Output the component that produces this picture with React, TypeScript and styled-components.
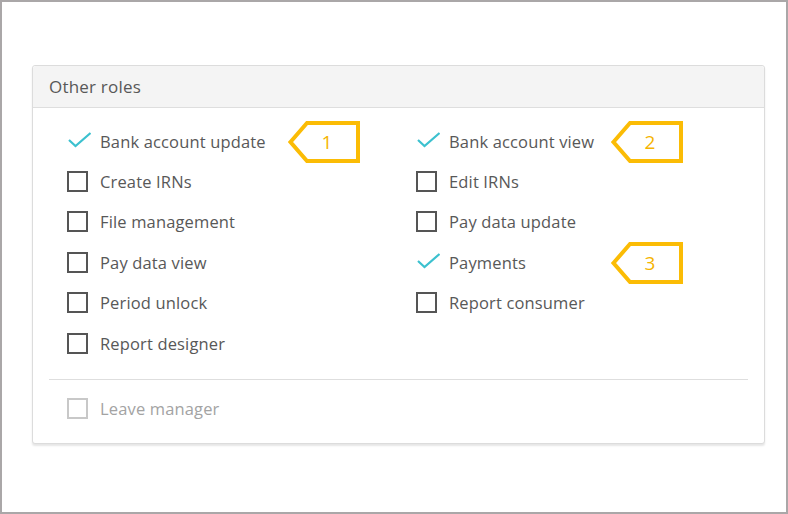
import { createGlobalStyle } from 'styled-components'
import styled from 'styled-components'

const GlobalStyle = createGlobalStyle`
  html, body {
    margin: 0;
    padding: 0;
    background: #fff;
  }
`

const Frame = styled.div`
  box-sizing: border-box;
  width: 788px;
  height: 514px;
  border: 2px solid #aaa7a8;
  padding: 63px 21px 0 30px;
  font-family: 'Open Sans', Lato, sans-serif;
  color: #555;
`

const Card = styled.section`
  border: 1px solid #dcdcdc;
  border-radius: 3px;
  box-shadow: 0 2px 2px rgb(0 0 0 / 10%);
  background: #fff;
`

const Header = styled.header`
  height: 41px;
  display: flex;
  align-items: center;
  padding-left: 16px;
  background: #f4f4f4;
  border-bottom: 1px solid #dedede;
  border-radius: 3px 3px 0 0;
  font-size: 17px;
  letter-spacing: 0.2px;
  color: #585858;
`

const Body = styled.div`
  padding: 13px 16px 15px 16px;
`

const Grid = styled.div`
  display: grid;
  grid-template-columns: 349px 1fr;
  grid-auto-rows: 40.4px;
  padding-left: 18px;
`

const Row = styled.div`
  position: relative;
  display: flex;
  align-items: center;
  column-gap: 12px;
  font-size: 16.5px;
  letter-spacing: 0.15px;
`

const Label = styled.span<{ $disabled?: boolean }>`
  color: ${({ $disabled }) => ($disabled ? '#a3a3a3' : '#585858')};
`

const Box = styled.span<{ $disabled?: boolean }>`
  box-sizing: border-box;
  width: 21px;
  height: 21px;
  flex: none;
  border: 2px solid ${({ $disabled }) => ($disabled ? '#c8c8c8' : '#555')};
`

const Tick = styled.svg`
  width: 23px;
  height: 21px;
  flex: none;
  margin-right: -3px;
  margin-left: 1px;
`

const Divider = styled.hr`
  border: 0;
  border-top: 1px solid #dedede;
  margin: 16px 0 8px;
`

const LeaveRow = styled(Row)`
  height: 40px;
  padding-left: 18px;
`

const CalloutWrap = styled.div<{ $left: number }>`
  position: absolute;
  left: ${({ $left }) => $left}px;
  top: 50%;
  width: 72px;
  height: 42px;
  margin-top: -20px;
`

const CalloutNumber = styled.span`
  position: absolute;
  left: 6px;
  right: 0;
  top: 0;
  bottom: 0;
  display: flex;
  align-items: center;
  justify-content: center;
  color: #f5b400;
  font-family: 'Open Sans', sans-serif;
  font-size: 19px;
  letter-spacing: 0;
`

type Role = {
  label: string
  checked?: boolean
  callout?: { n: number; left: number }
}

const roles: Role[] = [
  { label: 'Bank account update', checked: true, callout: { n: 1, left: 221 } },
  { label: 'Bank account view', checked: true, callout: { n: 2, left: 195 } },
  { label: 'Create IRNs' },
  { label: 'Edit IRNs' },
  { label: 'File management' },
  { label: 'Pay data update' },
  { label: 'Pay data view' },
  { label: 'Payments', checked: true, callout: { n: 3, left: 195 } },
  { label: 'Period unlock' },
  { label: 'Report consumer' },
  { label: 'Report designer' },
]

const Callout = ({ n, left }: { n: number; left: number }) => (
  <CalloutWrap $left={left}>
    <svg width="72" height="42" viewBox="0 0 72 42">
      <polygon
        points="2.5,21 19,2 70,2 70,40 19,40"
        fill="none"
        stroke="#fbbc05"
        strokeWidth="4"
        strokeLinejoin="miter"
      />
    </svg>
    <CalloutNumber>{n}</CalloutNumber>
  </CalloutWrap>
)

const Check = () => (
  <Tick viewBox="0 0 23 21">
    <polyline points="1,9 7.5,15 22.5,2" fill="none" stroke="#3cc1cf" strokeWidth="2.2" />
  </Tick>
)

const App = () => (
  <>
    <GlobalStyle />
    <Frame>
      <Card>
        <Header>Other roles</Header>
        <Body>
          <Grid>
            {roles.map((r) => (
              <Row key={r.label}>
                {r.checked ? <Check /> : <Box />}
                <Label>{r.label}</Label>
                {r.callout ? <Callout n={r.callout.n} left={r.callout.left} /> : null}
              </Row>
            ))}
          </Grid>
          <Divider />
          <LeaveRow>
            <Box $disabled />
            <Label $disabled>Leave manager</Label>
          </LeaveRow>
        </Body>
      </Card>
    </Frame>
  </>
)

export default App
